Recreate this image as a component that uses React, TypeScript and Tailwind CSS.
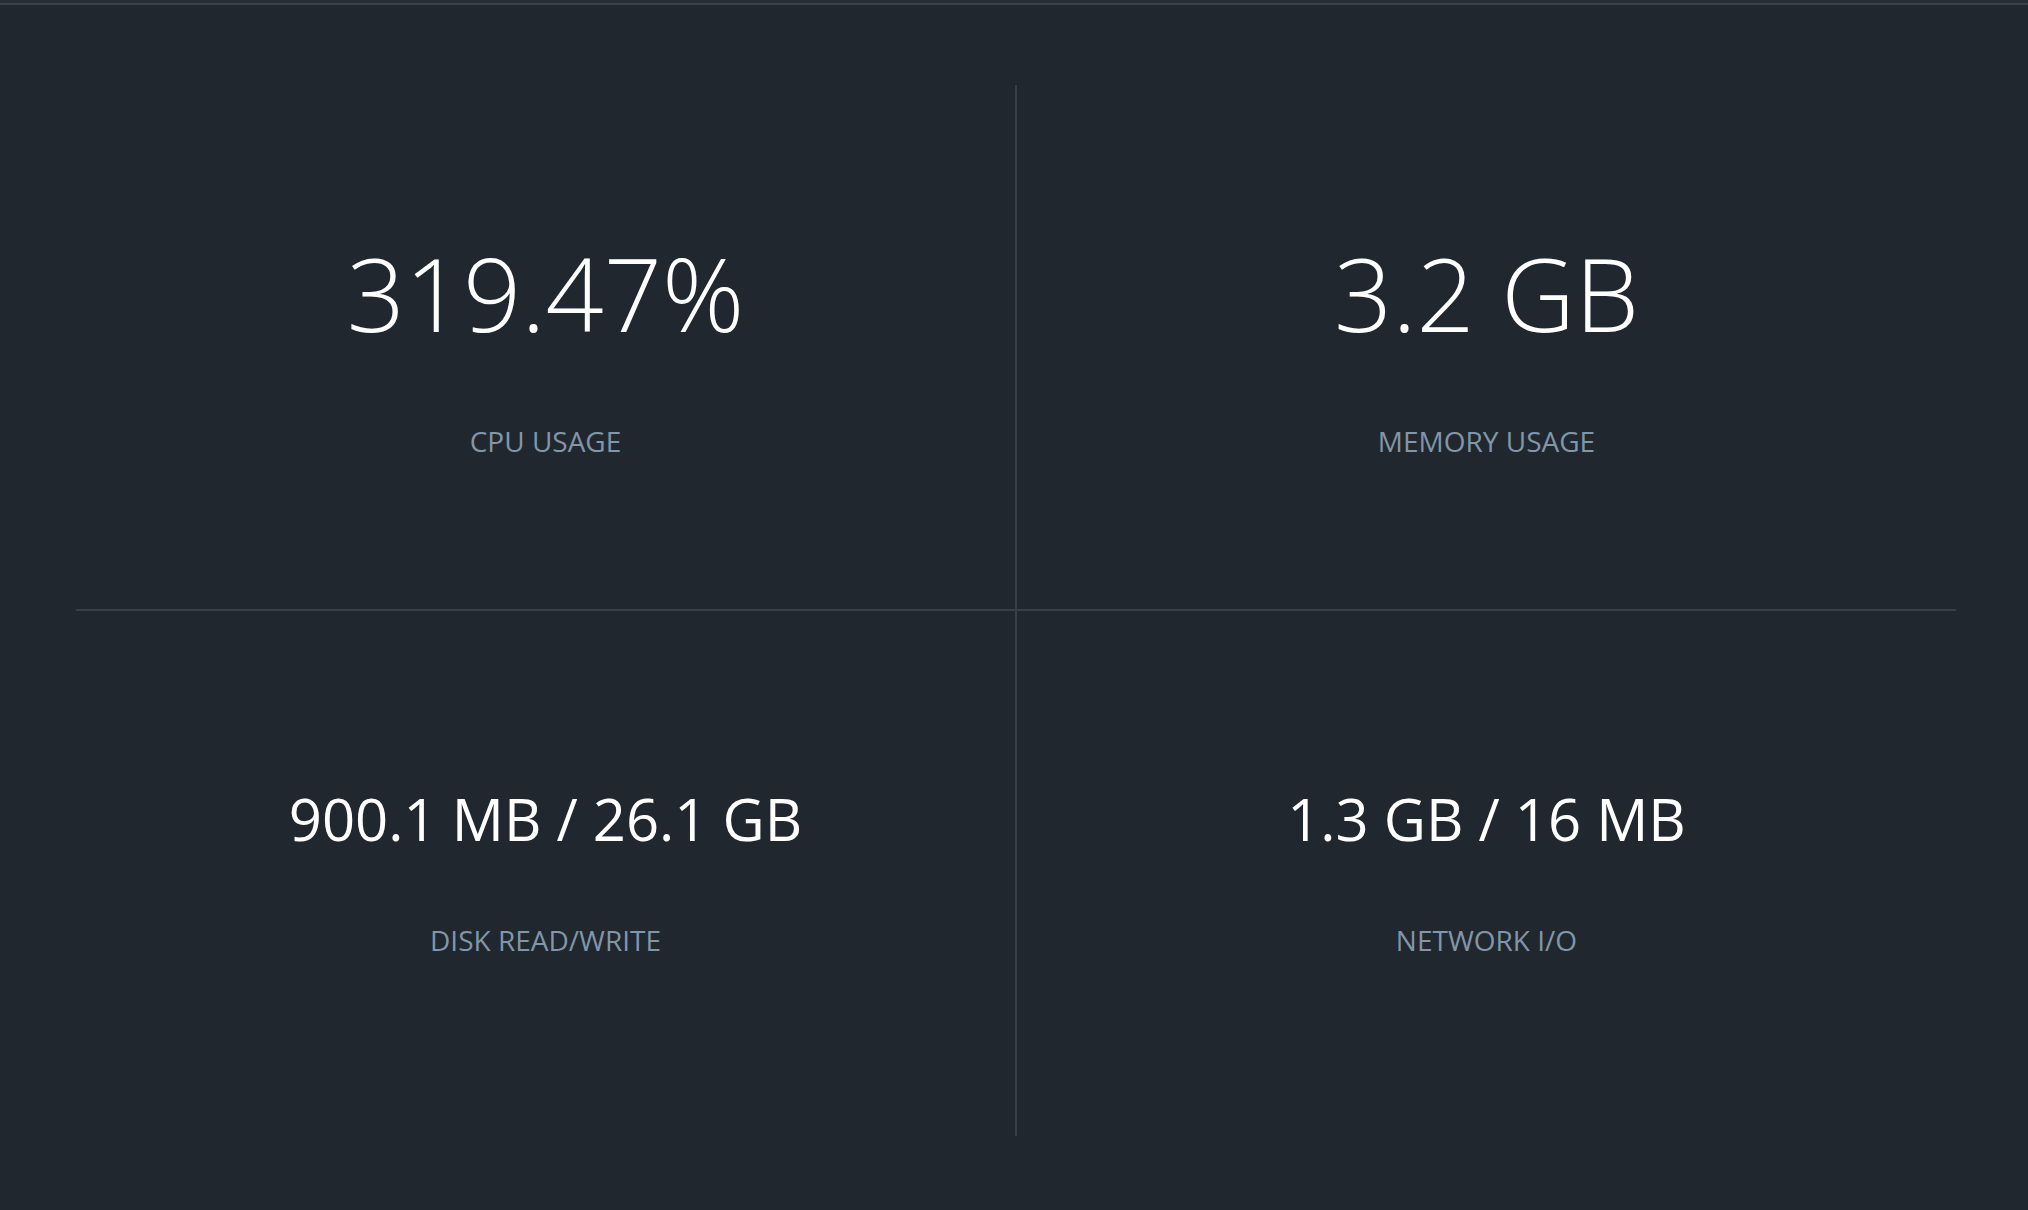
const stats = [
  { value: "319.47%", label: "CPU USAGE" },
  { value: "3.2 GB", label: "MEMORY USAGE" },
  { value: "900.1 MB / 26.1 GB", label: "DISK READ/WRITE" },
  { value: "1.3 GB / 16 MB", label: "NETWORK I/O" },
];

function StatCell({
  value,
  label,
  big,
  className,
}: {
  value: string;
  label: string;
  big?: boolean;
  className?: string;
}) {
  return (
    <div className={`flex flex-col items-center justify-center border-[#383f47] ${className ?? ""}`}>
      <div
        className={
          big
            ? "text-[102px] font-light text-white leading-normal"
            : "text-[58px] font-normal text-white leading-normal"
        }
      >
        {value}
      </div>
      <div className={`${big ? "mt-[51px]" : "mt-[57px]"} text-[28px] leading-normal text-[#8196a8]`}>
        {label}
      </div>
    </div>
  );
}

export default function App() {
  return (
    <div className="min-h-screen bg-[#20272f] font-['Open_Sans',sans-serif]">
      <div className="h-[3px] bg-[#262d35]" />
      <div className="h-[2px] bg-[#3a4149]" />
      <div className="pl-[76px] pr-[72px] pt-[80px]">
        <div className="grid grid-cols-[941px_1fr] grid-rows-[526px_525px]">
          <StatCell {...stats[0]} big className="border-r-2 border-b-2 pb-[16px]" />
          <StatCell {...stats[1]} big className="border-b-2 pb-[16px]" />
          <StatCell {...stats[2]} className="border-r-2 pb-[12px]" />
          <StatCell {...stats[3]} className="pb-[12px]" />
        </div>
      </div>
    </div>
  );
}
